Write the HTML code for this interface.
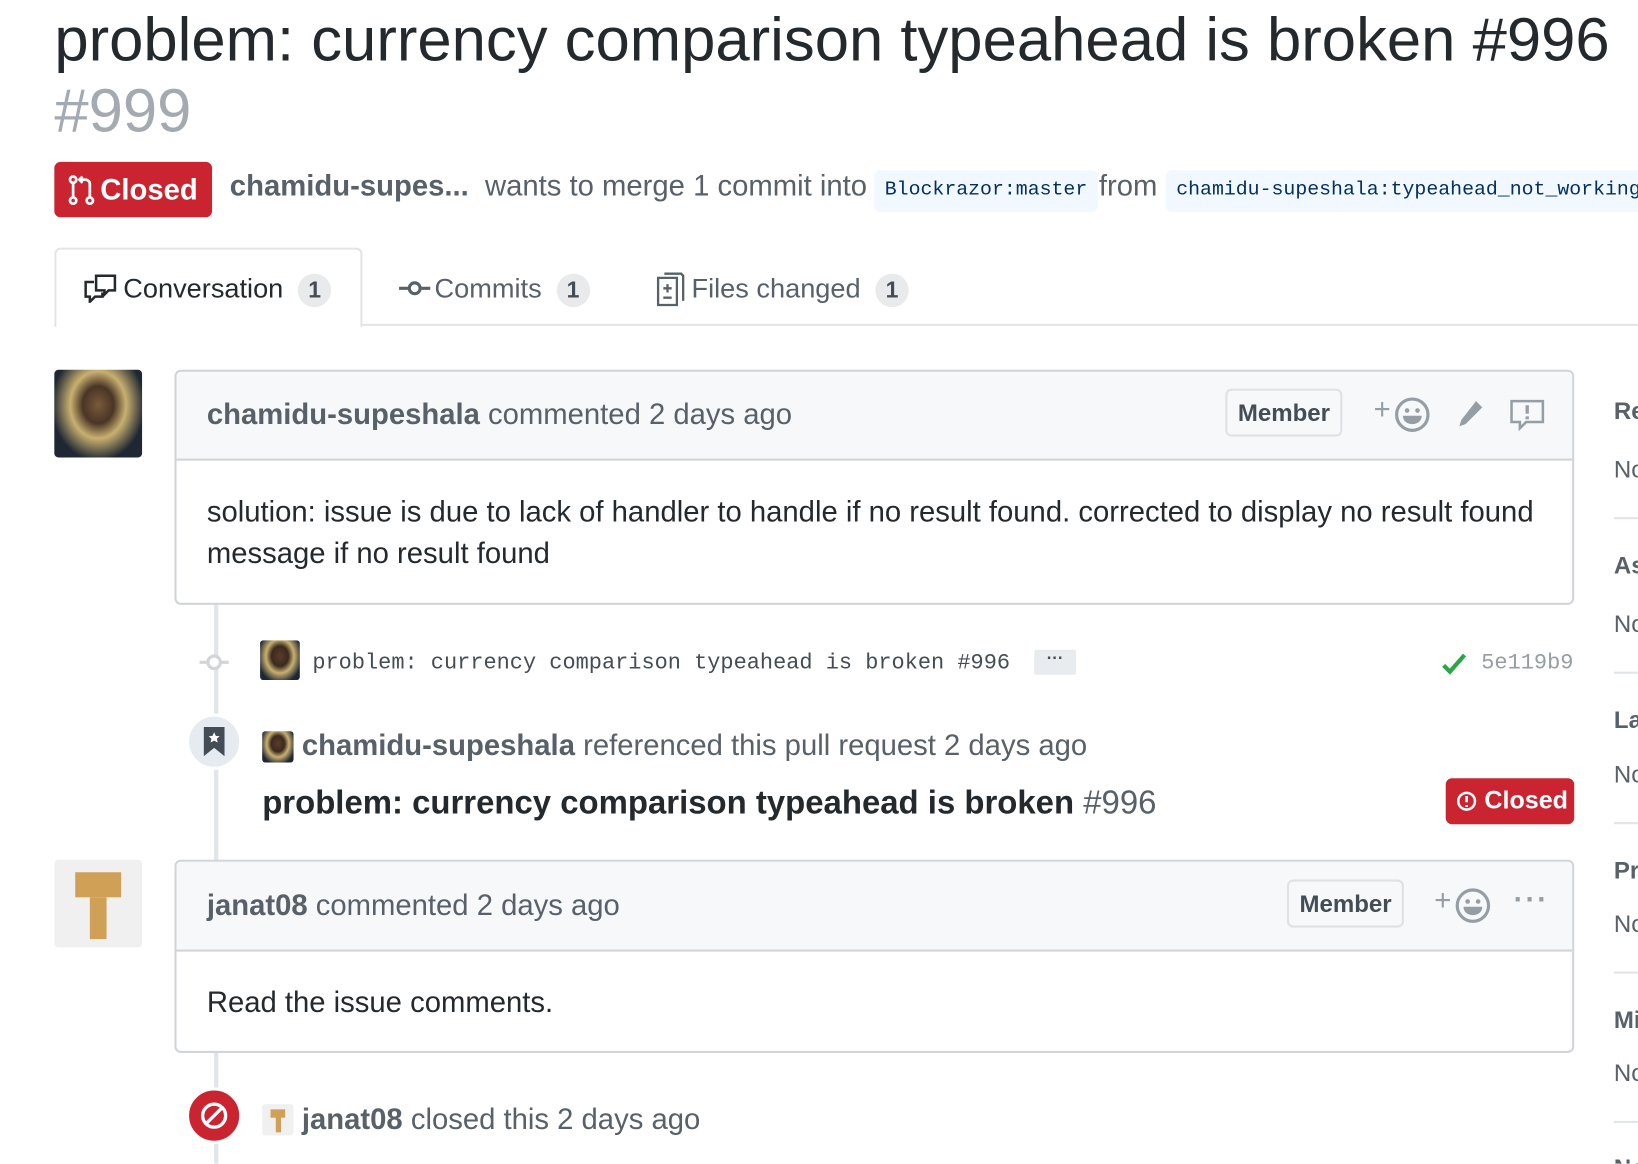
<!DOCTYPE html>
<html><head><meta charset="utf-8"><style>
*{margin:0;padding:0;box-sizing:border-box}
body{width:1638px;height:1164px;overflow:hidden;background:#fff;font-family:"Liberation Sans",sans-serif;color:#24292e;position:relative}
#w{position:absolute;left:0;top:0;width:1568px;height:1114px;transform:scale(1.0446);transform-origin:0 0;overflow:hidden}
.a{position:absolute;white-space:nowrap}
.mono{font-family:"Liberation Mono",monospace}
.g{color:#586069}
.box{position:absolute;border:2px solid #d1d5da;border-radius:6px;background:#fff;overflow:hidden}
.hd{background:#f6f8fa;border-bottom:2px solid #d1d5da;position:absolute;left:0;right:0;top:0}
.cnt{display:inline-block;background:#e9eaec;border-radius:20px;width:32px;height:32px;text-align:center;line-height:32px;font-size:22px;font-weight:bold;color:#444d56;margin-left:14px;vertical-align:middle}
.mem{position:absolute;border:2px solid #dfe2e5;border-radius:6px;font-weight:bold;font-size:23px;color:#444d56;padding:0 10px;height:46px;line-height:42px}
.sb{position:absolute;left:1545px;font-size:23px;white-space:nowrap}
.hr{position:absolute;left:1545px;width:23px;height:2px;background:#e1e4e8}
</style></head><body><div id="w">
<div class="a" style="left:52px;top:2px;font-size:59px;line-height:72px">problem: currency comparison typeahead is broken #996</div>
<div class="a" style="left:52px;top:70px;font-size:59px;line-height:72px;color:#a3aab1">#999</div>

<div class="a" style="left:52px;top:155px;width:151px;height:53px;background:#cb2431;border-radius:6px;color:#fff;font-weight:bold;font-size:28px;line-height:53px;padding-left:44px">Closed</div>
<svg class="a" style="left:64px;top:166px" width="28" height="32" viewBox="0 0 14 16"><g fill="none" stroke="#fff" stroke-width="1.3"><circle cx="3" cy="13" r="1.5"/><circle cx="11" cy="13" r="1.5"/><path d="M3 4.5v7M11 11.5V5c0-1-1-2-2-2H6M7.5 1.5 6 3l1.5 1.5"/><circle cx="3" cy="3" r="1.5"/></g></svg>
<div class="a" style="left:220px;top:161px;font-size:28px;line-height:34px"><b style="color:#586069">chamidu-supes...</b>&nbsp; <span class="g">wants to merge 1 commit into</span></div>
<div class="a mono" style="left:837px;top:163px;height:40px;background:#f1f8ff;border-radius:6px;padding:0 10px;font-size:19px;line-height:36px;color:#032f62">Blockrazor:master</div>
<div class="a g" style="left:1052px;top:161px;font-size:28px;line-height:34px">from</div>
<div class="a mono" style="left:1116px;top:163px;height:40px;background:#f1f8ff;border-radius:6px;padding:0 10px;font-size:19px;line-height:36px;color:#032f62">chamidu-supeshala:typeahead_not_working</div>

<div class="a" style="left:52px;top:310px;width:1516px;height:2px;background:#e1e4e8"></div>
<div class="a" style="left:52px;top:237px;width:295px;height:76px;border:2px solid #e1e4e8;border-bottom:none;border-radius:6px 6px 0 0;background:#fff"></div>
<svg class="a" style="left:80px;top:262px" width="32" height="28" viewBox="0 0 16 14"><path fill="none" stroke="#24292e" stroke-width="1.2" d="M6 1h9v7h-3l-2 2V8H6zM5 4H1v7h2v2.5L5.5 11H9V9"/></svg>
<div class="a" style="left:118px;top:258px;font-size:26px;line-height:36px">Conversation<span class="cnt">1</span></div>
<svg class="a" style="left:382px;top:266px" width="30" height="20" viewBox="0 0 15 10"><g fill="none" stroke="#586069" stroke-width="1.5"><circle cx="7.5" cy="5" r="2.6"/><path d="M0 5h4.9M10.1 5H15"/></g></svg>
<div class="a g" style="left:416px;top:258px;font-size:26px;line-height:36px">Commits<span class="cnt">1</span></div>
<svg class="a" style="left:628px;top:260px" width="28" height="34" viewBox="0 0 14 17"><g fill="none" stroke="#586069" stroke-width="1.1"><path d="M1 3h9v13H1z"/><path d="M4 1h8l1 1v12"/><path d="M5.5 6v4M3.5 8h4M3.5 12.5h4"/></g></svg>
<div class="a g" style="left:662px;top:258px;font-size:26px;line-height:36px">Files changed<span class="cnt">1</span></div>

<div class="a" style="left:52px;top:354px;width:84px;height:84px;border-radius:4px;background:radial-gradient(ellipse at 50% 40%,#7a5a3a 0,#4a3526 25%,#c9b070 45%,#1e2733 75%)"></div>
<div class="a" style="left:205px;top:578px;width:4px;height:246px;background:#e1e4e8"></div>
<div class="box" style="left:167px;top:354px;width:1340px;height:225px">
 <div class="hd" style="height:85px"></div>
 <div class="a" style="left:29px;top:24px;font-size:28px;line-height:34px"><b class="g">chamidu-supeshala</b> <span class="g">commented 2 days ago</span></div>
 <div class="mem" style="left:1004px;top:16px">Member</div>
 <div class="a" style="left:1146px;top:20px;font-size:28px;color:#959da5">+</div>
 <svg class="a" style="left:1166px;top:24px" width="34" height="34" viewBox="0 0 17 17"><circle cx="8.5" cy="8.5" r="7.5" fill="none" stroke="#959da5" stroke-width="1.5"/><circle cx="6" cy="6.5" r="1.1" fill="#959da5"/><circle cx="11" cy="6.5" r="1.1" fill="#959da5"/><path d="M4 9h9c0 2.5-2 4-4.5 4S4 11.5 4 9z" fill="#959da5"/></svg>
 <svg class="a" style="left:1222px;top:26px" width="30" height="30" viewBox="0 0 15 15"><path d="M11 1l3 3-8 8-3 1 1-3z" fill="#959da5"/></svg>
 <svg class="a" style="left:1276px;top:26px" width="34" height="32" viewBox="0 0 17 16"><path fill="none" stroke="#959da5" stroke-width="1.2" d="M1 1h15v10H8l-3 3v-3H1z"/><path d="M8.5 3v4M8.5 8.3v1.4" stroke="#959da5" stroke-width="1.6"/></svg>
 <div class="a" style="left:29px;top:114px;font-size:28px;line-height:40px;white-space:normal;width:1300px">solution: issue is due to lack of handler to handle if no result found. corrected to display no result found message if no result found</div>
</div>

<svg class="a" style="left:191px;top:622px" width="30" height="24" viewBox="0 0 30 24"><circle cx="14" cy="12" r="6" fill="#fff" stroke="#d1d5da" stroke-width="3"/><path d="M0 12h8M20 12h8" stroke="#d1d5da" stroke-width="3"/></svg>
<div class="a" style="left:249px;top:613px;width:38px;height:38px;border-radius:3px;background:radial-gradient(ellipse at 50% 40%,#5a3d28 0,#3b2a20 30%,#c9b070 50%,#1e2733 80%)"></div>
<div class="a mono" style="left:299px;top:622px;font-size:21px;line-height:28px;color:#444d56">problem: currency comparison typeahead is broken #996</div>
<div class="a" style="left:990px;top:622px;width:40px;height:24px;background:#e9ecef;border-radius:2px;text-align:center;font-weight:bold;font-size:16px;line-height:18px;color:#444d56">···</div>
<svg class="a" style="left:1380px;top:624px" width="24" height="24" viewBox="0 0 12 12"><path d="M1 6.5l3 3 7-8" fill="none" stroke="#28a745" stroke-width="2"/></svg>
<div class="a mono" style="left:1418px;top:622px;font-size:21px;line-height:28px;color:#959da5">5e119b9</div>

<div class="a" style="left:178px;top:683px;width:54px;height:54px;border-radius:50%;background:#e6ebf1;border:3px solid #fff"></div>
<svg class="a" style="left:195px;top:696px" width="20" height="28" viewBox="0 0 10 14"><path d="M0 0h10v14L5 10 0 14z" fill="#444d56"/><path d="M5 2.5l.8 1.7 1.8.2-1.3 1.2.4 1.8L5 6.5l-1.7.9.4-1.8-1.3-1.2 1.8-.2z" fill="#fff"/></svg>
<div class="a" style="left:251px;top:700px;width:30px;height:30px;border-radius:3px;background:radial-gradient(ellipse at 50% 40%,#5a3d28 0,#3b2a20 30%,#c9b070 50%,#1e2733 80%)"></div>
<div class="a" style="left:289px;top:697px;font-size:28px;line-height:34px"><b class="g">chamidu-supeshala</b> <span class="g">referenced this pull request 2 days ago</span></div>
<div class="a" style="left:251px;top:749px;font-size:31.5px;line-height:38px;font-weight:bold">problem: currency comparison typeahead is broken <span style="font-weight:normal;color:#586069">#996</span></div>
<div class="a" style="left:1384px;top:745px;width:123px;height:44px;background:#cb2431;border-radius:6px;color:#fff;font-weight:bold;font-size:24px;line-height:44px;padding-left:37px">Closed</div>
<svg class="a" style="left:1394px;top:757px" width="20" height="20" viewBox="0 0 10 10"><circle cx="5" cy="5" r="4" fill="none" stroke="#fff" stroke-width="1.2"/><path d="M5 2.5v3M5 6.8v1" stroke="#fff" stroke-width="1.2"/></svg>

<div class="a" style="left:52px;top:823px;width:84px;height:84px;border-radius:4px;background:#f0f0f0"></div>
<div class="a" style="left:72px;top:835px;width:44px;height:24px;background:#d1a057"></div>
<div class="a" style="left:86px;top:859px;width:16px;height:40px;background:#d1a057"></div>
<div class="a" style="left:205px;top:1007px;width:4px;height:107px;background:#e1e4e8"></div>
<div class="box" style="left:167px;top:823px;width:1340px;height:185px">
 <div class="hd" style="height:86px"></div>
 <div class="a" style="left:29px;top:25px;font-size:28px;line-height:34px"><b class="g">janat08</b> <span class="g">commented 2 days ago</span></div>
 <div class="mem" style="left:1063px;top:17px">Member</div>
 <div class="a" style="left:1204px;top:21px;font-size:28px;color:#959da5">+</div>
 <svg class="a" style="left:1224px;top:25px" width="34" height="34" viewBox="0 0 17 17"><circle cx="8.5" cy="8.5" r="7.5" fill="none" stroke="#959da5" stroke-width="1.5"/><circle cx="6" cy="6.5" r="1.1" fill="#959da5"/><circle cx="11" cy="6.5" r="1.1" fill="#959da5"/><path d="M4 9h9c0 2.5-2 4-4.5 4S4 11.5 4 9z" fill="#959da5"/></svg>
 <div class="a" style="left:1280px;top:20px;font-size:28px;color:#959da5;font-weight:bold;letter-spacing:2px">···</div>
 <div class="a" style="left:29px;top:115px;font-size:28px;line-height:40px">Read the issue comments.</div>
</div>

<div class="a" style="left:178px;top:1041px;width:54px;height:54px;border-radius:50%;background:#cb2431;border:3px solid #fff"></div>
<svg class="a" style="left:191px;top:1054px" width="28" height="28" viewBox="0 0 14 14"><circle cx="7" cy="7" r="5.5" fill="none" stroke="#fff" stroke-width="1.6"/><path d="M3 11L11 3" stroke="#fff" stroke-width="1.6"/></svg>
<div class="a" style="left:251px;top:1057px;width:30px;height:30px;background:#f0f0f0;border-radius:3px"></div>
<div class="a" style="left:259px;top:1062px;width:14px;height:8px;background:#d1a057"></div>
<div class="a" style="left:264px;top:1068px;width:5px;height:16px;background:#d1a057"></div>
<div class="a" style="left:289px;top:1055px;font-size:28px;line-height:34px"><b class="g">janat08</b> <span class="g">closed this 2 days ago</span></div>

<div class="sb" style="top:380px;font-weight:bold;color:#586069">Re</div>
<div class="sb" style="top:436px;color:#586069">No</div>
<div class="hr" style="top:495px"></div>
<div class="sb" style="top:528px;font-weight:bold;color:#586069">As</div>
<div class="sb" style="top:584px;color:#586069">No</div>
<div class="hr" style="top:643px"></div>
<div class="sb" style="top:676px;font-weight:bold;color:#586069">La</div>
<div class="sb" style="top:728px;color:#586069">No</div>
<div class="hr" style="top:787px"></div>
<div class="sb" style="top:820px;font-weight:bold;color:#586069">Pr</div>
<div class="sb" style="top:871px;color:#586069">No</div>
<div class="hr" style="top:930px"></div>
<div class="sb" style="top:963px;font-weight:bold;color:#586069">Mi</div>
<div class="sb" style="top:1014px;color:#586069">No</div>
<div class="hr" style="top:1073px"></div>
<div class="sb" style="top:1105px;font-weight:bold;color:#586069">No</div>
</div></body></html>
